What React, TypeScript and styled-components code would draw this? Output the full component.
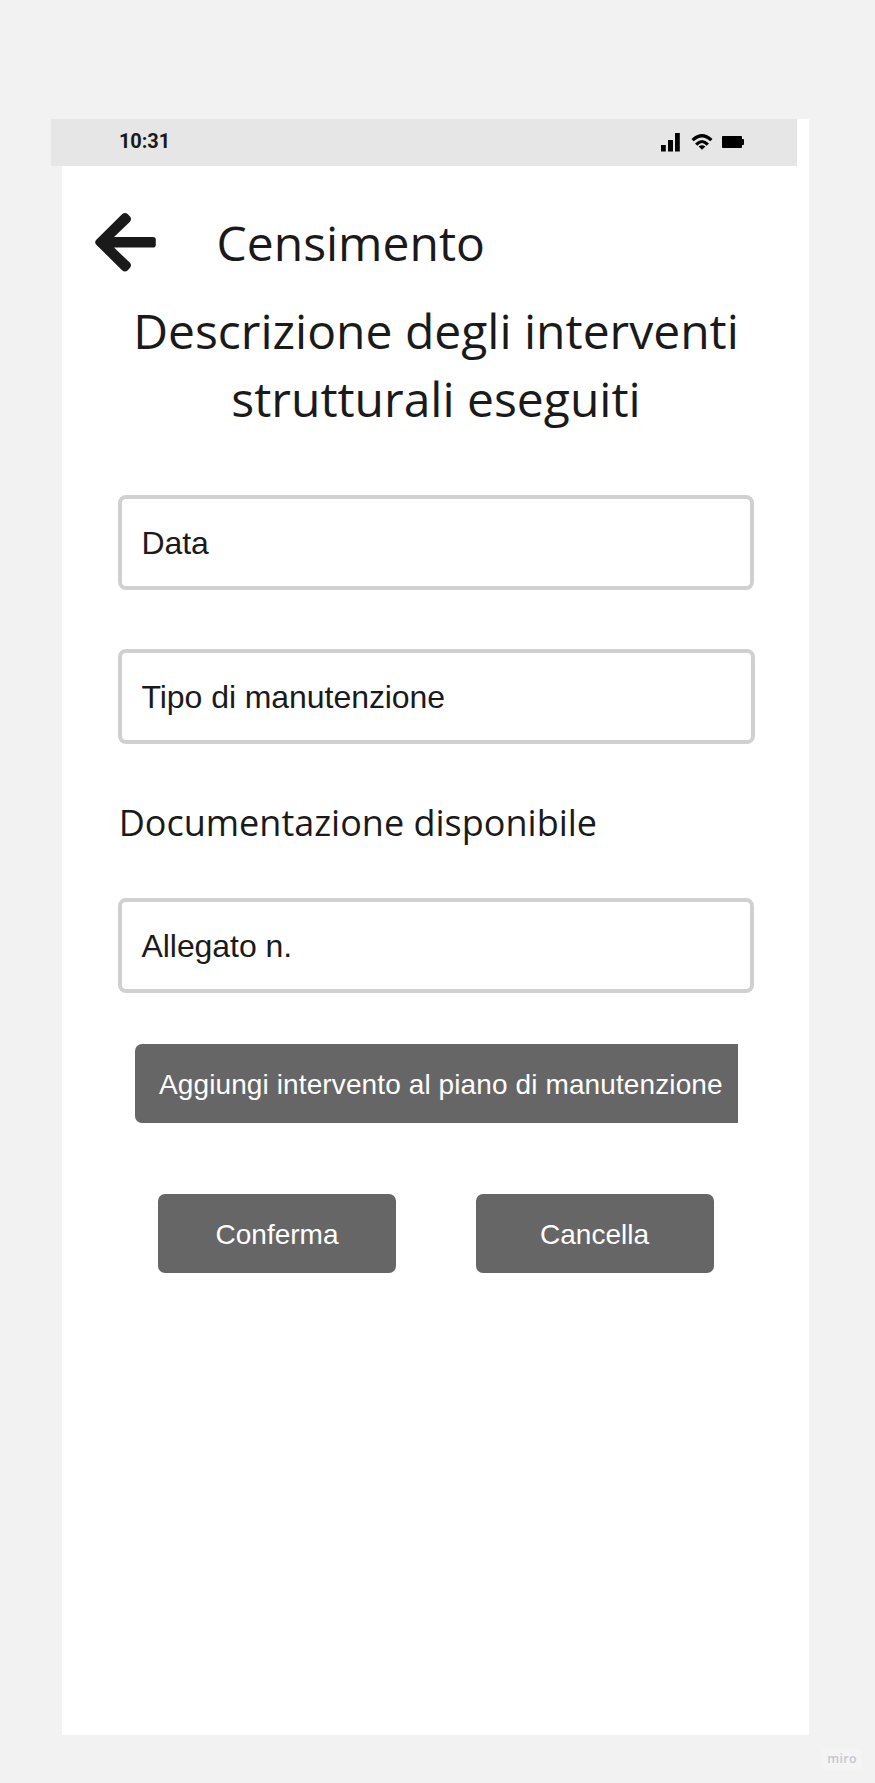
import React from "react";
import styled, { createGlobalStyle } from "styled-components";

const GlobalStyle = createGlobalStyle`
  * { box-sizing: border-box; }
  body { margin: 0; background: #f2f2f2; }
`;

const Page = styled.div`
  display: flex;
  flex-direction: column;
  width: 875px;
  height: 1783px;
  padding-top: 119px;
  background: #f2f2f2;
  color: #1a1a1a;
  overflow: hidden;
`;

const Phone = styled.main`
  flex: none;
  display: flex;
  flex-direction: column;
  width: 747px;
  height: 1616px;
  margin-left: 62px;
  background: #fff;
`;

const StatusBar = styled.header`
  flex: none;
  display: flex;
  justify-content: space-between;
  align-items: flex-start;
  width: 746px;
  height: 47px;
  margin-left: -11px;
  padding: 10px 50px 0 68px;
  background: #e6e6e6;
`;

const Time = styled.time`
  font: 700 20px/24px Roboto, sans-serif;
  letter-spacing: -0.1px;
`;

const StatusIcons = styled.svg`
  display: block;
  width: 90px;
  height: 28px;
`;

const Header = styled.div`
  display: flex;
  align-items: flex-start;
  height: 131px;
  padding: 46px 0 0 33px;
`;

const BackButton = styled.button`
  width: 62px;
  height: 62px;
  padding: 0;
  border: 0;
  background: none;
  svg { display: block; }
`;

const Title = styled.h1`
  margin: -3px 0 0 59.5px;
  font: 400 48px/68px "Open Sans", sans-serif;
`;

const Heading = styled.h2`
  width: 640px;
  margin: 0 0 0 54px;
  font: 400 48px/68px "Open Sans", sans-serif;
  text-align: center;
`;

const Form = styled.form`
  display: flex;
  flex-direction: column;
  align-items: flex-start;
  margin: 62px 0 0 56px;
`;

const Field = styled.div<{ $wide?: boolean; $gap: number }>`
  display: flex;
  align-items: center;
  width: ${(p) => (p.$wide ? 637 : 636)}px;
  height: 95px;
  margin-bottom: ${(p) => p.$gap}px;
  padding: 0 20px 0 19.5px;
  border: 4px solid #d0d0d0;
  border-radius: 8px;
  font: 400 32px/36px "Liberation Sans", Arial, sans-serif;
  letter-spacing: -0.06px;
`;

const Subheading = styled.h3`
  height: 50px;
  margin: 0 0 50.5px 0.7px;
  font: 400 36px/50px "Open Sans", sans-serif;
`;

const Button = styled.button<{ $width: number; $clipped?: boolean }>`
  width: ${(p) => p.$width}px;
  height: 79px;
  padding: ${(p) => (p.$clipped ? "2px 0 0 24px" : "2px 0 0")};
  border: 0;
  border-radius: ${(p) => (p.$clipped ? "7px 0 0 7px" : "7px")};
  background: #666;
  color: #fff;
  font: 400 28px/32px "Liberation Sans", Arial, sans-serif;
  letter-spacing: ${(p) => (p.$clipped ? "0.11px" : "0")};
  text-align: ${(p) => (p.$clipped ? "left" : "center")};
  white-space: nowrap;
`;

const AddRow = styled.div`
  display: flex;
  margin: 0 0 71px 17px;
`;

const Actions = styled.div`
  display: flex;
  gap: 79.5px;
  margin-left: 40px;
`;

const Brand = styled.footer`
  align-self: flex-end;
  width: 40px;
  height: 20px;
  margin: 14px 13px 0 0;
  background: #f4f4f4;
  color: #c6c6d0;
  font: 600 12.5px/20px "Open Sans", sans-serif;
  letter-spacing: 0.3px;
  text-align: center;
`;

export default function App() {
  return (
    <>
      <GlobalStyle />
      <Page>
        <Phone>
          <StatusBar>
            <Time>10:31</Time>
            <StatusIcons viewBox="657 129 90 28">
              <path d="M661 145h4.8v6.4h-4.8zM668 140h5v11.4h-5zM675 133h4.8v18.4h-4.8z" />
              <path d="M692.6 140.2Q702 131.2 711.4 140.2M696.2 144.6Q702 138.4 707.8 144.6" fill="none" stroke="#000" strokeWidth="3.2" />
              <path d="M698.6 146.5Q702 143.9 705.4 146.5L702 149.7Z" />
              <path d="M722.8 136h18.4q.8 0 .8.8v2.2h1.2q.8 0 .8.8v4.4q0 .8-.8.8h-1.2v2.2q0 .8-.8.8h-18.4q-.8 0-.8-.8v-10.4q0-.8.8-.8z" />
            </StatusIcons>
          </StatusBar>
          <Header>
            <BackButton aria-label="Indietro">
              <svg width="62" height="62" viewBox="95 212 62 62" fill="#1a1a1a">
                <path d="M122.3 214Q125 211.8 127.6 214L130 216.4Q132 219 130 221.8L114 237H153Q155.8 237 155.8 239.8V244.8Q155.8 247.6 153 247.6H114L130 262.8Q132 265.3 130 267.8L127.6 270.4Q125 272.6 122.3 270.4L96.3 244.7Q94 242.3 96.3 239.7Z" />
              </svg>
            </BackButton>
            <Title>Censimento</Title>
          </Header>
          <Heading>Descrizione degli interventi strutturali eseguiti</Heading>
          <Form>
            <Field $gap={59}>Data</Field>
            <Field $wide $gap={53.5}>Tipo di manutenzione</Field>
            <Subheading>Documentazione disponibile</Subheading>
            <Field $gap={51}>Allegato n.</Field>
            <AddRow>
              <Button type="button" $width={603} $clipped>Aggiungi intervento al piano di manutenzione</Button>
            </AddRow>
            <Actions>
              <Button type="button" $width={238}>Conferma</Button>
              <Button type="button" $width={238}>Cancella</Button>
            </Actions>
          </Form>
        </Phone>
        <Brand>miro</Brand>
      </Page>
    </>
  );
}
